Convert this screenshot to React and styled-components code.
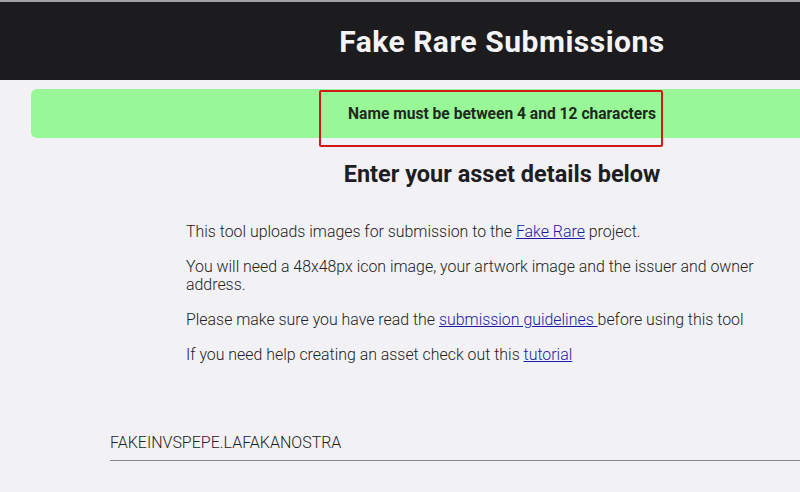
import React from 'react'
import styled, {createGlobalStyle} from 'styled-components'

const GlobalStyle = createGlobalStyle`
    html, body {
        margin: 0;
        padding: 0;
        background: #f2f2f6;
        overflow: hidden;
    }
    body {
        font-family: Roboto, "Liberation Sans", sans-serif;
        color: #222;
    }
`

const Page = styled.div`
    width: 1004px;
    min-height: 492px;
    background: #f2f2f6;
`

const Header = styled.header`
    height: 78px;
    border-top: 2px solid #a3a3a6;
    background: #1c1c1e;
    display: flex;
    align-items: center;
    justify-content: center;

    h1 {
        margin: 0;
        font-size: 30px;
        font-weight: 700;
        letter-spacing: 0.5px;
        color: #f4f4f8;
    }
`

const Banner = styled.div`
    position: relative;
    margin: 9px 31px 0;
    height: 49px;
    border-radius: 6px;
    background: #98f898;
    display: flex;
    align-items: center;
    justify-content: center;
    font-size: 15.6px;
    font-weight: 700;
    color: #1d2a1d;
`

const Highlight = styled.span`
    position: absolute;
    left: 288px;
    top: 1px;
    width: 340px;
    height: 53px;
    border: 2px solid #d41818;
    border-radius: 2px;
`

const Heading = styled.h2`
    margin: 22px 0 0;
    text-align: center;
    font-size: 23.5px;
    font-weight: 700;
    color: #1e1e22;
`

const Intro = styled.div`
    width: 600px;
    margin: 35px 0 0 186px;
    font-size: 15.9px;
    font-weight: 300;
    line-height: 18px;
    color: #222;

    p {
        margin: 0 0 17px;
    }

    a {
        color: #1a1aa6;
    }
`

const Field = styled.div`
    margin: 63px 110px 0;
    border-bottom: 1px solid #8a8a8e;
    padding: 6px 0 8px;
    font-size: 16px;
    font-weight: 300;
    color: #222;
    text-transform: uppercase;
`

export default function App() {
    return (
        <Page>
            <GlobalStyle />
            <Header>
                <h1>Fake Rare Submissions</h1>
            </Header>
            <Banner>
                Name must be between 4 and 12 characters
                <Highlight />
            </Banner>
            <Heading>Enter your asset details below</Heading>
            <Intro>
                <p>This tool uploads images for submission to the <a href="#">Fake Rare</a> project.</p>
                <p>You will need a 48x48px icon image, your artwork image and the issuer and owner address.</p>
                <p>Please make sure you have read the <a href="#">submission guidelines </a>before using this tool</p>
                <p>If you need help creating an asset check out this <a href="#">tutorial</a></p>
            </Intro>
            <Field>FAKEINVSPEPE.LAFAKANOSTRA</Field>
        </Page>
    )
}
